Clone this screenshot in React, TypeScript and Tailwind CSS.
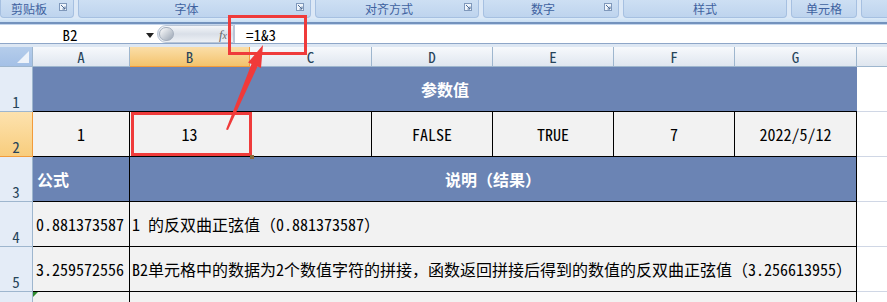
import React from 'react';

const mono = "font-['Noto_Sans_Mono_CJK_SC','Noto_Sans_CJK_SC','Liberation_Mono',monospace]";
const cjk = "font-['Noto_Sans_CJK_SC','Liberation_Sans',sans-serif]";

function Launcher() {
  return (
    <svg width="8" height="8" viewBox="0 0 8 8" className="absolute right-[6px] top-[3px]">
      <rect x="0.5" y="0.5" width="7" height="7" fill="#eef4fb" stroke="#7f98bb" />
      <path d="M2 2 L6 6 M6 3.5 V6 H3.5" stroke="#4d6a94" strokeWidth="1" fill="none" />
    </svg>
  );
}

function Group({ label, w, launcher }: { label: string; w: string; launcher?: boolean }) {
  return (
    <div
      className={`${w} relative h-[18px] shrink-0 rounded-b-[4px] border border-t-0 border-[#a6c0e1] bg-gradient-to-b from-[#cddff3] to-[#bed4ee] flex items-center justify-center ${launcher ? 'pr-[16px]' : ''}`}
    >
      <span className={`${cjk} text-[12px] leading-none text-[#3f62a0]`}>{label}</span>
      {launcher && <Launcher />}
    </div>
  );
}

const cols = [
  { k: 'A', w: 'w-[97px]' },
  { k: 'B', w: 'w-[120px]' },
  { k: 'C', w: 'w-[122px]' },
  { k: 'D', w: 'w-[121px]' },
  { k: 'E', w: 'w-[121px]' },
  { k: 'F', w: 'w-[121px]' },
  { k: 'G', w: 'w-[122px]' },
];

function RowHead({ n, h = 'h-[45px]', active }: { n: string; h?: string; active?: boolean }) {
  return (
    <div
      className={`w-[33px] ${h} shrink-0 border-r border-b flex items-end justify-center ${mono} text-[15px] leading-[18px] text-[#27445a] ${
        active ? 'bg-gradient-to-b from-[#fde2ae] to-[#f8cd7d] border-[#f29b3b]' : 'bg-[#e4ecf7] border-[#9eb6ce]'
      }`}
    >
      {n}
    </div>
  );
}

function HCell({ h = 'h-[45px]' }: { h?: string }) {
  return <div className={`flex-1 ${h} bg-white border-b border-[#d0d7e5]`} />;
}

export default function App() {
  return (
    <div className="relative w-[887px] h-[302px] overflow-hidden bg-white">
      {/* ribbon group labels */}
      <div className="flex gap-[4px] bg-[#dce8f6] h-[18px]">
        <Group label="剪贴板" w="w-[74px]" launcher />
        <Group label="字体" w="w-[233px]" launcher />
        <Group label="对齐方式" w="w-[164px]" launcher />
        <Group label="数字" w="w-[136px]" launcher />
        <Group label="样式" w="w-[164px]" />
        <Group label="单元格" w="w-[66px]" />
        <Group label="" w="w-[40px]" />
      </div>
      <div className="h-[4px] bg-gradient-to-b from-[#dbeaf8] to-[#c9def3]" />
      <div className="h-[2px] bg-[#7392bd]" />
      <div className="h-[1px] bg-[#c3d5ec]" />

      {/* formula bar */}
      <div className="flex h-[18px] bg-white">
        <div className="w-[157px] relative flex items-center">
          <span className={`${mono} w-[140px] text-center text-[15px] leading-none text-black`}>B2</span>
          <svg width="8" height="5" viewBox="0 0 8 5" className="absolute left-[146px] top-[8px]">
            <path d="M0 0 H8 L4 5 Z" fill="#222" />
          </svg>
        </div>
        <div className="w-[77px] h-[18px] rounded-l-full bg-gradient-to-b from-[#f4f6f9] via-[#d9dfe8] to-[#eef1f5] border border-[#b9c5d6] relative flex items-center justify-end pr-[6px]">
          <div className="absolute left-[1px] top-[1px] w-[15px] h-[14px] rounded-full bg-gradient-to-br from-[#ffffff] to-[#9aa5b4] border border-[#a5afbd]" />
          <span className="font-['Liberation_Serif',serif] italic text-[13px] leading-none text-[#6a6a6a]">
            f<span className="text-[10px]">x</span>
          </span>
        </div>
        <div className="w-[1px] bg-[#b9c5d6]" />
        <div className={`flex-1 flex items-center pl-[11px] ${mono} text-[15px] leading-none text-black`}>=1&amp;3</div>
      </div>
      <div className="h-[1px] bg-[#8ea6c8]" />
      <div className="h-[3px] bg-[#dde7f3]" />

      {/* column headers */}
      <div className="flex h-[20px]">
        <div className="w-[33px] shrink-0 relative bg-gradient-to-b from-[#b5cdeb] to-[#a4c0e6] border-r border-b border-[#9eb6ce]">
          <svg width="12" height="12" viewBox="0 0 12 12" className="absolute right-[3px] bottom-[3px]">
            <path d="M12 0 V12 H0 Z" fill="#eef3fa" />
          </svg>
        </div>
        {cols.map((c) => (
          <div
            key={c.k}
            className={`${c.w} shrink-0 border-r border-b flex items-center justify-center ${mono} text-[15px] leading-none text-[#27445a] ${
              c.k === 'B'
                ? 'bg-gradient-to-b from-[#fbdea8] to-[#f3c36b] border-[#f29b3b]'
                : 'bg-gradient-to-b from-[#f7f9fc] to-[#dfe6ef] border-[#9eb6ce]'
            }`}
          >
            {c.k}
          </div>
        ))}
        <div className="flex-1 bg-gradient-to-b from-[#f7f9fc] to-[#dfe6ef] border-b border-[#9eb6ce]" />
      </div>

      {/* row 1 */}
      <div className="flex">
        <RowHead n="1" />
        <div className={`w-[824px] h-[45px] shrink-0 bg-[#6b84b4] border-b border-black flex items-center justify-center ${cjk} text-[16px] font-bold text-white`}>
          参数值
        </div>
        <HCell />
      </div>

      {/* row 2 */}
      <div className="flex">
        <RowHead n="2" active />
        {['1', '13', '', 'FALSE', 'TRUE', '7', '2022/5/12'].map((v, i) => (
          <div
            key={i}
            className={`${cols[i].w} h-[45px] shrink-0 bg-[#f2f2f2] border-r border-b border-black flex items-center justify-center ${mono} text-[16px] text-black`}
          >
            {v}
          </div>
        ))}
        <HCell />
      </div>

      {/* row 3 */}
      <div className="flex">
        <RowHead n="3" />
        <div className={`w-[97px] h-[45px] shrink-0 bg-[#6b84b4] border-r border-b border-black flex items-center pl-[4px] ${cjk} text-[16px] font-bold text-white`}>
          公式
        </div>
        <div className={`w-[727px] h-[45px] shrink-0 bg-[#6b84b4] border-r border-b border-black flex items-center justify-center ${cjk} text-[16px] font-bold text-white`}>
          说明（结果）
        </div>
        <HCell />
      </div>

      {/* rows 4-5 */}
      {[
        ['4', '0.881373587', '1 的反双曲正弦值（0.881373587）'],
        ['5', '3.259572556', 'B2单元格中的数据为2个数值字符的拼接，函数返回拼接后得到的数值的反双曲正弦值（3.256613955）'],
      ].map(([n, a, b]) => (
        <div key={n} className="flex">
          <RowHead n={n} />
          <div className={`w-[97px] h-[45px] shrink-0 bg-[#f2f2f2] border-r border-b border-black flex items-center pl-[3px] ${mono} text-[16px] text-black whitespace-nowrap`}>
            {a}
          </div>
          <div className={`w-[727px] h-[45px] shrink-0 bg-[#f2f2f2] border-r border-b border-black flex items-center pl-[2px] ${mono} text-[16px] text-black whitespace-nowrap`}>
            {b}
          </div>
          <HCell />
        </div>
      ))}

      {/* row 6 (cut off) */}
      <div className="flex">
        <RowHead n="" />
        <div className="w-[97px] h-[45px] shrink-0 bg-[#f2f2f2] border-r border-black relative">
          <div className="absolute left-0 top-0 w-0 h-0 border-t-[5px] border-r-[5px] border-t-[#2e8b2e] border-r-transparent" />
        </div>
        <div className="w-[727px] h-[45px] shrink-0 bg-[#f2f2f2] border-r border-black" />
        <HCell />
      </div>

      {/* annotations */}
      <div className="absolute left-[228px] top-[15px] w-[79px] h-[40px] border-[3px] border-[#ef3b3b]" />
      <div className="absolute left-[131px] top-[112px] w-[121px] h-[44px] border-[3px] border-[#ef3b3b]" />
      <div className="absolute left-[250px] top-[155px] w-[4px] h-[4px] bg-[#8a6a3a]" />
      <svg className="absolute left-0 top-0 pointer-events-none" width="887" height="302" viewBox="0 0 887 302">
        <polygon
          points="263,45 261,68 257.5,66.5 228,130 226,129.5 251.5,64 248,62.5"
          fill="#f03a3a"
        />
      </svg>
    </div>
  );
}
